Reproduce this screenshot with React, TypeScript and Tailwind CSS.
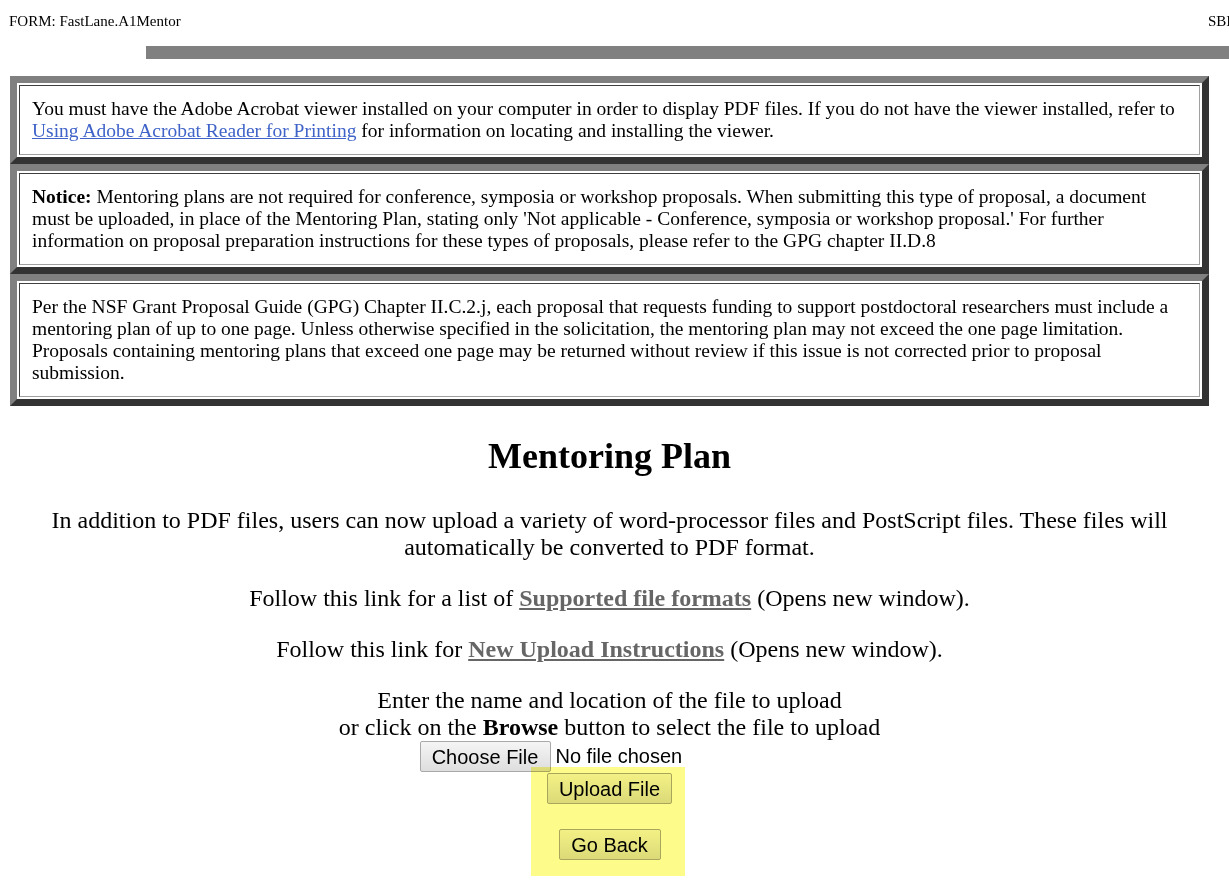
import React from 'react';

const serif = { fontFamily: '"Liberation Serif", "Times New Roman", serif' };
const sans = { fontFamily: '"Liberation Sans", Arial, sans-serif' };

const NoticeBox: React.FC<{ children: React.ReactNode }> = ({ children }) => (
  <div className="ml-[10px] w-[1199px] border-[7px] border-t-[#808080] border-l-[#808080] border-b-[#333333] border-r-[#333333] bg-white p-[2px]">
    <div className="border border-t-[#404040] border-l-[#404040] border-b-[#a0a0a0] border-r-[#a0a0a0] px-[12px] py-[12px] text-[19.5px] leading-[22px] text-black">
      {children}
    </div>
  </div>
);

const Btn: React.FC<{ label: string; className?: string }> = ({ label, className = '' }) => (
  <button
    className={`h-[31px] rounded-[2px] border border-[#a9a9a9] bg-gradient-to-b from-[#f5f5f5] to-[#dedede] text-[20px] leading-none text-black ${className}`}
    style={sans}
  >
    {label}
  </button>
);

export default function App() {
  return (
    <div className="relative min-h-[887px] w-full overflow-hidden bg-white" style={serif}>
      {/* top line */}
      <div className="flex w-[1250px] items-center pl-[9px] pt-[12px] text-[15px] leading-[18px] text-black">
        <span>FORM: FastLane.A1Mentor</span>
        <span className="ml-auto w-[42px]">SBIR</span>
      </div>
      <div className="ml-[146px] mt-[16px] h-[13px] w-[1100px] bg-[#808080]" />

      {/* notices */}
      <div className="mt-[17px]">
        <NoticeBox>
          You must have the Adobe Acrobat viewer installed on your computer in order to display PDF files. If you do not have the viewer installed, refer to{' '}
          <a href="#" className="text-[#3f63c8] underline">Using Adobe Acrobat Reader for Printing</a> for information on locating and installing the viewer.
        </NoticeBox>
        <NoticeBox>
          <b>Notice:</b> Mentoring plans are not required for conference, symposia or workshop proposals. When submitting this type of proposal, a document must be uploaded, in place of the Mentoring Plan, stating only 'Not applicable - Conference, symposia or workshop proposal.' For further information on proposal preparation instructions for these types of proposals, please refer to the GPG chapter II.D.8
        </NoticeBox>
        <NoticeBox>
          Per the NSF Grant Proposal Guide (GPG) Chapter II.C.2.j, each proposal that requests funding to support postdoctoral researchers must include a mentoring plan of up to one page. Unless otherwise specified in the solicitation, the mentoring plan may not exceed the one page limitation. Proposals containing mentoring plans that exceed one page may be returned without review if this issue is not corrected prior to proposal submission.
        </NoticeBox>
      </div>

      {/* upload section */}
      <div className="ml-[10px] w-[1199px] text-center text-black">
        <h1 className="mt-[30px] text-[36px] font-bold leading-[41px]">Mentoring Plan</h1>
        <p className="mx-auto mt-[30px] w-[1170px] text-[24px] leading-[27px]">
          In addition to PDF files, users can now upload a variety of word-processor files and PostScript files. These files will automatically be converted to PDF format.
        </p>
        <p className="mt-[24px] text-[24px] leading-[27px]">
          Follow this link for a list of{' '}
          <a href="#" className="font-bold text-[#666666] underline">Supported file formats</a> (Opens new window).
        </p>
        <p className="mt-[24px] text-[24px] leading-[27px]">
          Follow this link for{' '}
          <a href="#" className="font-bold text-[#666666] underline">New Upload Instructions</a> (Opens new window).
        </p>
        <p className="mt-[24px] text-[24px] leading-[27px]">
          Enter the name and location of the file to upload
          <br />
          or click on the <b>Browse</b> button to select the file to upload
        </p>
        <div className="mx-auto flex w-[380px] items-center">
          <Btn label="Choose File" className="w-[131px]" />
          <span className="ml-[5px] text-[20px] leading-[31px]" style={sans}>No file chosen</span>
        </div>
        <div className="mt-[1px] flex justify-center">
          <Btn label="Upload File" className="w-[125px]" />
        </div>
        <div className="mt-[25px] flex justify-center">
          <Btn label="Go Back" className="w-[102px]" />
        </div>
      </div>

      {/* highlight overlay */}
      <div className="pointer-events-none absolute left-[531px] top-[767px] h-[109px] w-[154px] bg-[#fdfb8a] mix-blend-multiply" />
    </div>
  );
}
